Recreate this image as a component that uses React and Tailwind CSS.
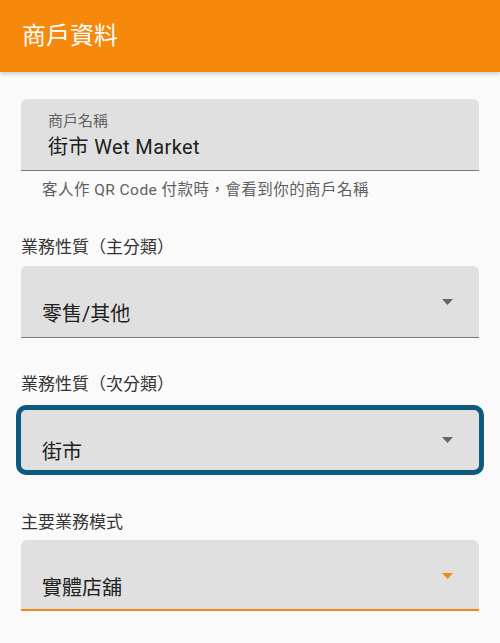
import React from 'react';

const font = { fontFamily: 'Roboto, "Noto Sans CJK TC", sans-serif' };

function Arrow({ color = '#666666' }) {
  return (
    <svg width="11" height="6" viewBox="0 0 11 6" className="shrink-0">
      <path d="M0 0 L11 0 L5.5 6 Z" fill={color} />
    </svg>
  );
}

// 下拉選單欄位
function SelectField({ label, value, focused = false, accent = false }) {
  return (
    <div>
      <div className="text-[17px] leading-[24px] text-[#333333]">{label}</div>
      {focused ? (
        <div className="mt-[9px] -mx-[5px] h-[70px] rounded-[10px] border-[5px] border-[#0e5a7d] bg-[#e0e0e0] flex justify-between pt-[27px] pl-[21px] pr-[26px]">
          <span className="text-[20px] leading-[30px] text-[#212121]">{value}</span>
          <Arrow />
        </div>
      ) : (
        <div
          className={
            accent
              ? 'mt-[6px] h-[71px] rounded-t-[6px] bg-[#e0e0e0] border-b-[2px] border-[#f08a12] flex justify-between pt-[33px] pl-[21px] pr-[26px]'
              : 'mt-[7px] h-[72px] rounded-t-[6px] bg-[#e0e0e0] border-b border-[#7a7a7a] flex justify-between pt-[33px] pl-[21px] pr-[26px]'
          }
        >
          <span className="text-[20px] leading-[30px] text-[#212121]">{value}</span>
          <Arrow color={accent ? '#f08a12' : '#666666'} />
        </div>
      )}
    </div>
  );
}

export default function App() {
  return (
    <div style={font} className="w-[500px] h-[643px] bg-[#fafafa] overflow-hidden">
      <div className="h-[72px] bg-[#f6880b] flex items-center px-[22px] shadow-[0_2px_4px_rgba(0,0,0,0.18)] relative">
        <h1 className="text-[24px] text-white">商戶資料</h1>
      </div>

      <div className="px-[21px] pt-[27px]">
        {/* 商戶名稱 */}
        <div className="h-[72px] rounded-t-[6px] bg-[#e0e0e0] border-b border-[#7a7a7a] pl-[27px] pt-[12px]">
          <div className="text-[15px] leading-[20px] text-[#616161]">商戶名稱</div>
          <div className="mt-[-1px] text-[20px] leading-[34px] tracking-[0.4px] text-[#212121]">街市 Wet Market</div>
        </div>
        <p className="mt-[9px] pl-[21px] text-[15.5px] leading-[20px] tracking-[0.45px] text-[#5f5f5f]">
          客人作 QR Code 付款時，會看到你的商戶名稱
        </p>

        <div className="mt-[35px]">
          <SelectField label="業務性質（主分類）" value="零售/其他" />
        </div>
        <div className="mt-[34px]">
          <SelectField label="業務性質（次分類）" value="街市" focused />
        </div>
        <div className="mt-[35px]">
          <SelectField label="主要業務模式" value="實體店舖" accent />
        </div>
      </div>
    </div>
  );
}
